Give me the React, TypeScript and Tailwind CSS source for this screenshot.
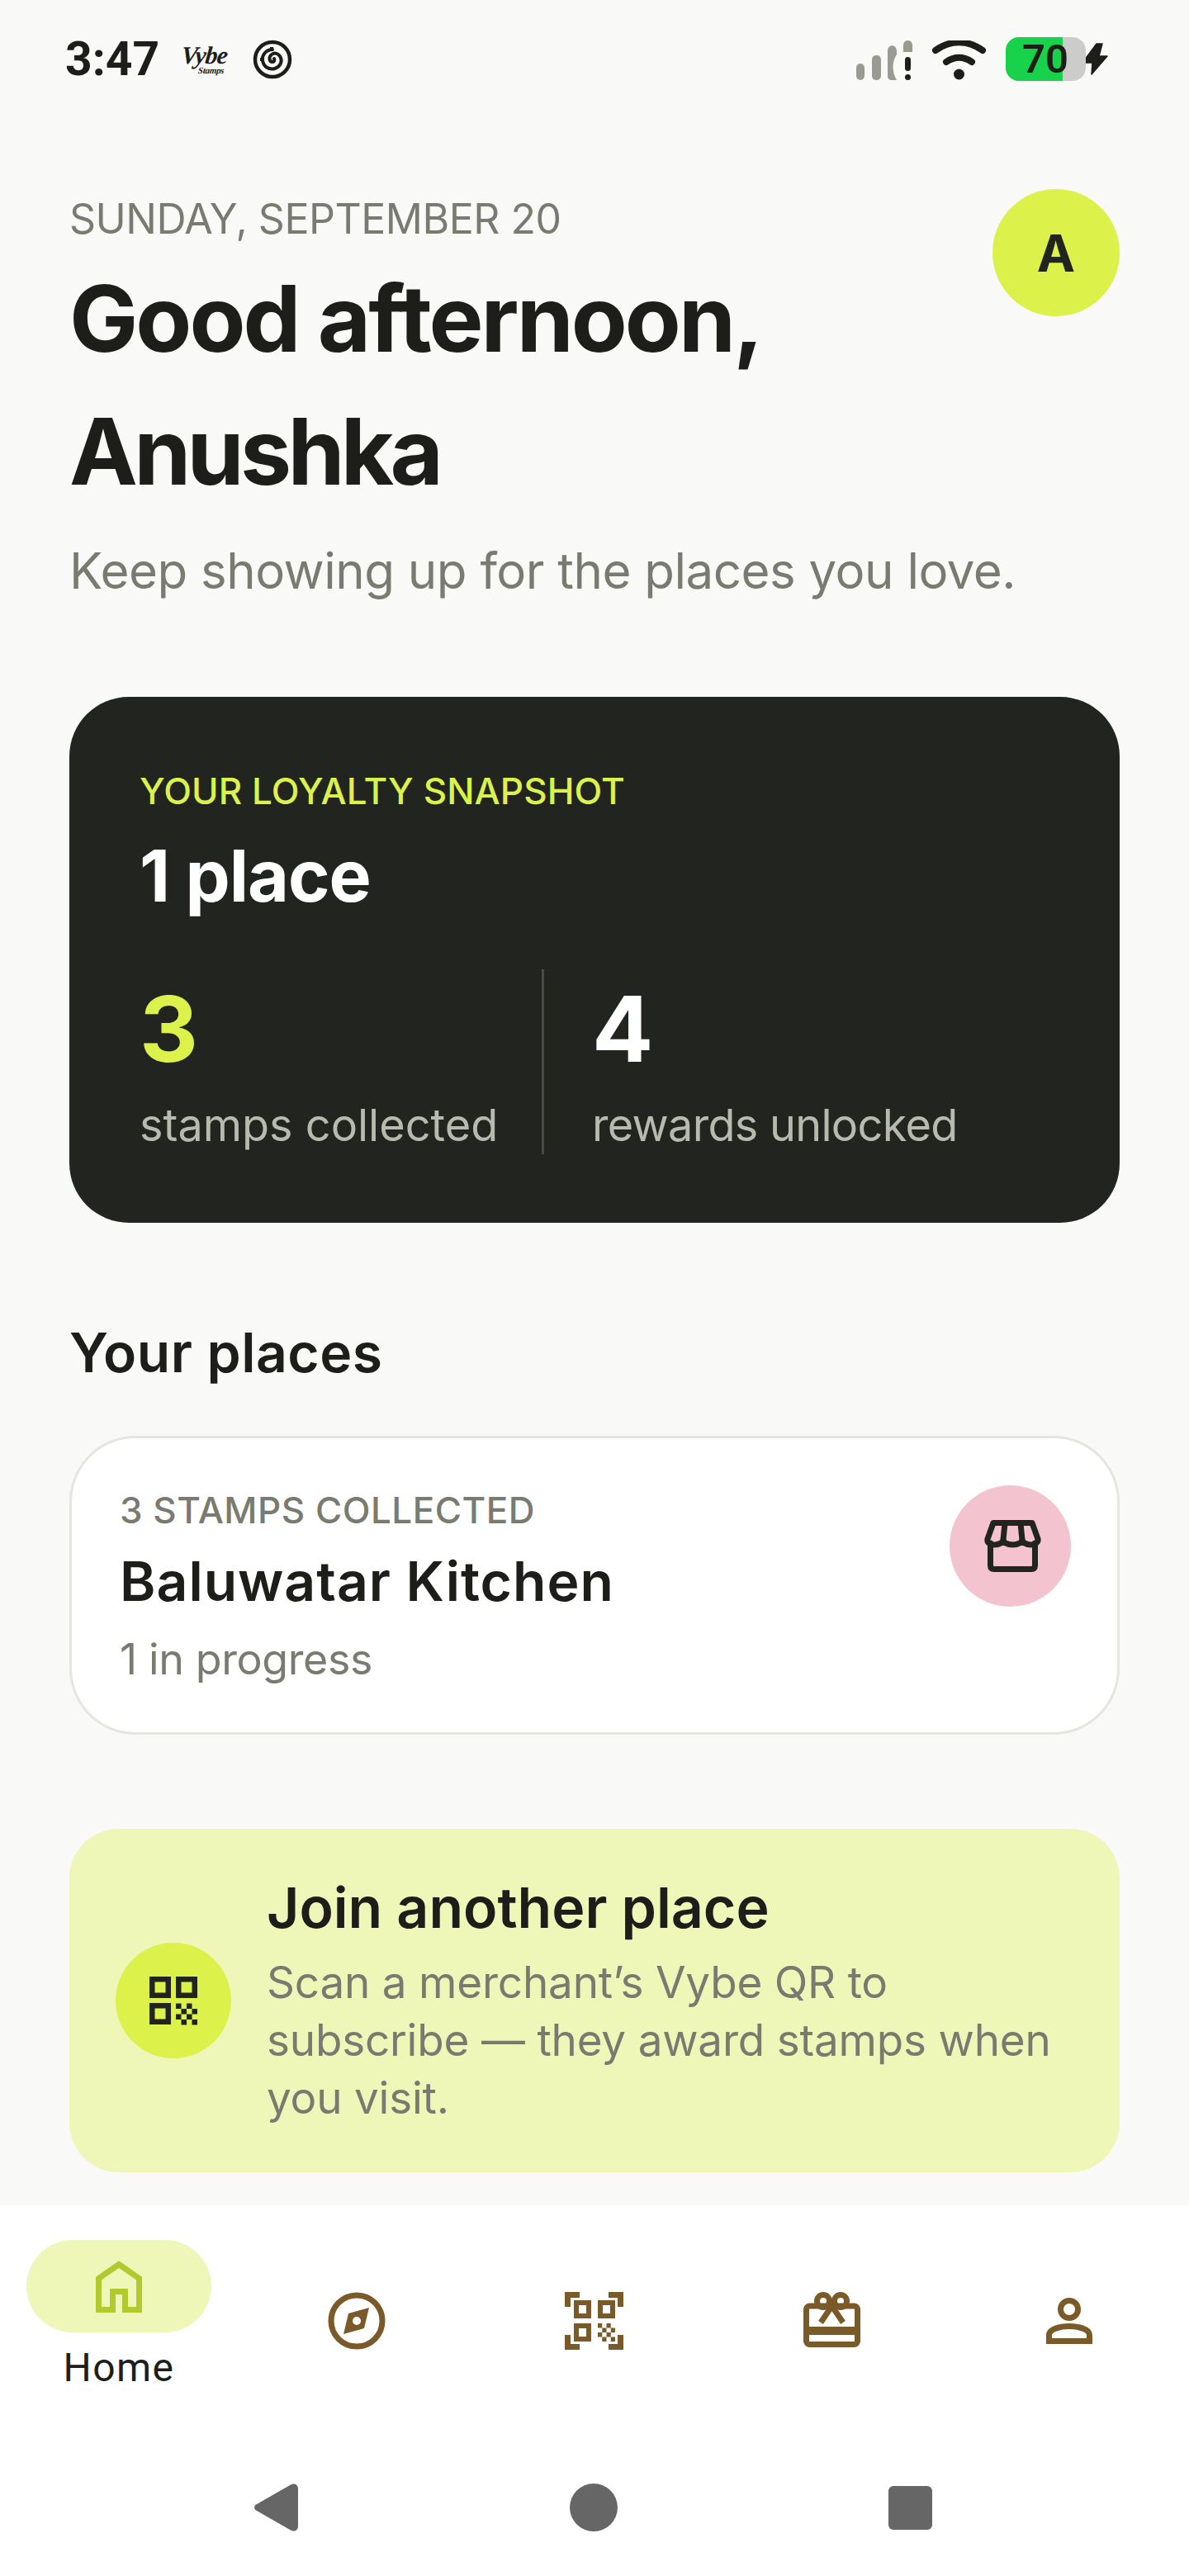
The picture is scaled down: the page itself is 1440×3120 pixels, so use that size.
import React from "react";

const F = "font-['Inter','Noto_Sans',sans-serif]";
const CHECKER = [[0,0],[0,2],[1,1],[1,3],[2,0],[2,2],[3,1],[3,3]];

function Store() {
  return (
    <svg width="69" height="63" viewBox="0 0 69 63" fill="none" stroke="#22241f" strokeWidth="7" strokeLinejoin="round" strokeLinecap="round">
      <path d="M11 3.5H58L65 23C66 28 60 30 56.5 30C51 30 46 27 46 24C46 27 41 30 34.5 30C28 30 23 27 23 24C23 27 18 30 12.5 30C8 30 3 28 4 23Z" />
      <path d="M23 24L25 4M46 24L44 4" />
      <path d="M7.5 28V55Q7.5 59.5 12 59.5H57Q61.5 59.5 61.5 55V28" />
    </svg>
  );
}

function QrSmall() {
  return (
    <svg width="59" height="59" viewBox="0 0 59 59" fill="none">
      <g stroke="#22241f" strokeWidth="6.5">
        <rect x="3.25" y="3.25" width="19.5" height="19.5" />
        <rect x="35.25" y="3.25" width="19.5" height="19.5" />
        <rect x="3.25" y="35.25" width="19.5" height="19.5" />
      </g>
      {CHECKER.map(([r, c]) => (
        <rect key={`${r}-${c}`} x={32 + c * 6.5} y={32.5 + r * 6.5} width="6.5" height="6.5" fill="#22241f" />
      ))}
    </svg>
  );
}

function NavHome() {
  return (
    <svg width="56" height="63" viewBox="0 0 56 63" fill="none" stroke="#b2c92f" strokeWidth="7">
      <path d="M20.5 59.5H3.5V21.5L28 4.5L52.5 21.5V59.5H35.5V37.5H20.5Z" />
    </svg>
  );
}

function NavCompass() {
  return (
    <svg width="70" height="70" viewBox="0 0 70 70" fill="none">
      <circle cx="35" cy="35" r="31" stroke="#7a5a28" strokeWidth="7" />
      <path fillRule="evenodd" clipRule="evenodd" d="M50 19L44 44L19 51L25 26ZM35 30A5 5 0 1 0 35 40A5 5 0 1 0 35 30Z" fill="#7a5a28" />
    </svg>
  );
}

function NavScan() {
  return (
    <svg width="71" height="70" viewBox="0 0 71 70" fill="none">
      <g stroke="#7a5a28" strokeWidth="7">
        <path d="M3.5 18V3.5H18M53 3.5H67.5V18M3.5 52V66.5H18M53 66.5H67.5V52" />
      </g>
      <g stroke="#7a5a28" strokeWidth="6">
        <rect x="14" y="13" width="15" height="16" />
        <rect x="43" y="13" width="15" height="16" />
        <rect x="14" y="41" width="15" height="16" />
      </g>
      {CHECKER.map(([r, c]) => (
        <rect key={`${r}-${c}`} x={40 + c * 5.25} y={38 + r * 5.5} width="5.25" height="5.5" fill="#7a5a28" />
      ))}
    </svg>
  );
}

function NavGift() {
  return (
    <svg width="69" height="67" viewBox="0 0 69 67" fill="none" stroke="#7a5a28" strokeWidth="7">
      <rect x="3.5" y="17" width="62" height="46.5" rx="4" />
      <circle cx="24" cy="11" r="7.5" />
      <circle cx="45" cy="11" r="7.5" />
      <path d="M34.5 17L21 37M34.5 17L48 37" />
      <path d="M3 47H66" strokeWidth="10" />
    </svg>
  );
}

function NavPerson() {
  return (
    <svg width="56" height="56" viewBox="0 0 56 56" fill="none" stroke="#7a5a28" strokeWidth="7">
      <circle cx="28" cy="14" r="10.5" />
      <path d="M3.5 52.5V45C3.5 38 17 34.5 28 34.5S52.5 38 52.5 45V52.5Z" />
    </svg>
  );
}

function Signal() {
  return (
    <svg width="70" height="50" viewBox="0 0 70 50" fill="none">
      <rect x="0" y="28" width="10" height="20" rx="5" fill="#9a9b90" />
      <rect x="19" y="18" width="11" height="30" rx="5" fill="#9a9b90" />
      <path d="M38 13C38 4 49 4 49 13V17C43 26 43 38 49 48H43C40 48 38 46 38 43Z" fill="#9a9b90" />
      <path d="M57 6C57 -2 68 -2 68 6V14H57Z" fill="#9a9b90" />
      <rect x="59" y="20" width="7" height="17" rx="3.5" fill="#1d1e19" />
      <circle cx="62.5" cy="44.5" r="3.5" fill="#1d1e19" />
    </svg>
  );
}

function Wifi() {
  return (
    <svg width="65" height="48" viewBox="0 0 65 48" fill="none">
      <path d="M4 12C22 -1 43 -1 61 12" stroke="#1d1e19" strokeWidth="8" strokeLinecap="round" />
      <path d="M17 26C27 19 38 19 48 26" stroke="#1d1e19" strokeWidth="8" strokeLinecap="round" />
      <circle cx="32.5" cy="41" r="6.5" fill="#1d1e19" />
    </svg>
  );
}

function Spiral() {
  return (
    <svg width="48" height="48" viewBox="0 0 48 48" fill="none" stroke="#1d1e19">
      <circle cx="24" cy="24" r="21" strokeWidth="4.5" />
      <path d="M24 12C16 12 11 19 12 25C13 33 20 37 27 35C33 33 36 27 34 22C32 17 27 15 23 18C19 21 20 27 24 27C26 27 27 25 26 23" strokeWidth="4" strokeLinecap="round" />
      <path d="M23 9V14M9 24H12" strokeWidth="4" />
    </svg>
  );
}

function Bolt() {
  const d = "M18 0L1 23H13L12 37L31 15H21L25 0Z";
  return (
    <svg className="overflow-visible" width="32" height="37" viewBox="0 0 32 37">
      <path d={d} fill="#f9f9f7" stroke="#f9f9f7" strokeWidth="7" strokeLinejoin="round" />
      <path d={d} fill="#1d1e19" stroke="#1d1e19" strokeWidth="1.5" strokeLinejoin="round" />
    </svg>
  );
}

export default function App() {
  return (
    <div className={`${F} flex h-[3120px] w-[1440px] flex-col overflow-hidden bg-[#f9f9f7] text-[#1d1e19]`}>
      {/* status bar */}
      <div className="flex h-[144px] shrink-0 items-start justify-between pl-[79px] pr-[98px] pt-[38px]">
        <div className="flex h-[68px] items-center">
          <span className="font-['Roboto',sans-serif] text-[57px] font-bold leading-[68px]">3:47</span>
          <div className="ml-[29px] flex w-[50px] -skew-x-6 flex-col items-center leading-none">
            <span className="font-['Liberation_Serif',serif] text-[30px] font-bold italic leading-[26px] tracking-[-1px]">Vybe</span>
            <span className="ml-[20px] font-['Liberation_Serif',serif] text-[11px] font-bold italic leading-[10px] tracking-[-0.3px]">Stamps</span>
          </div>
          <div className="ml-[34px]">
            <Spiral />
          </div>
        </div>
        <div className="flex items-start pt-[11px]">
          <Signal />
          <div className="ml-[22px]">
            <Wifi />
          </div>
          <div className="relative ml-[24px] mt-[-4px] h-[53px] w-[97px]">
            <div className="h-full w-full overflow-hidden rounded-[16px] bg-[#cccccb]">
              <div className="h-full w-[69px] bg-[#18d24c]" />
            </div>
            <span className="absolute left-[20px] top-0 font-['Roboto',sans-serif] text-[49px] font-semibold leading-[53px]">70</span>
          </div>
          <div className="ml-[-5px] mt-[4px]">
            <Bolt />
          </div>
        </div>
      </div>

      {/* scrolling content */}
      <div className="flex flex-1 flex-col px-[84px]">
        <div className="flex items-start justify-between">
          <div>
            <p className="mt-[89px] text-[50px] leading-[64px] tracking-[-0.5px] text-[#7a7b70]">SUNDAY, SEPTEMBER 20</p>
            <h1 className="mt-[8px] text-[111px] font-bold leading-[161px] tracking-[-3px]">
              Good afternoon,<br /><span className="tracking-[-4.7px]">Anushka</span>
            </h1>
          </div>
          <div className="mt-[85px] flex h-[154px] w-[154px] items-center justify-center rounded-full bg-[#dcf24b] text-[62px] font-bold text-[#22241f]">A</div>
        </div>
        <p className="mt-[24px] text-[60px] leading-[80px] tracking-[-0.5px] text-[#7a7b70]">Keep showing up for the places you love.</p>

        {/* dark card */}
        <div className="mt-[113px] h-[637px] rounded-[72px] bg-[#222420] pl-[85px] pt-[84px]">
          <p className="text-[44px] font-medium leading-[60px] tracking-[0.1px] text-[#dcf24b]">YOUR LOYALTY SNAPSHOT</p>
          <p className="mt-[23px] text-[86px] font-bold leading-[100px] tracking-[-1px] text-white">1 place</p>
          <div className="mt-[63px] flex h-[224px]">
            <div className="w-[490px] border-r-[3px] border-[#4a4b44] pt-[9px]">
              <p className="text-[110px] font-bold leading-[126px] text-[#dcf24b]">3</p>
              <p className="mt-[19px] text-[54px] leading-[70px] text-[#b8baae]">stamps collected</p>
            </div>
            <div className="pl-[58px] pt-[9px]">
              <p className="text-[110px] font-bold leading-[126px] text-white">4</p>
              <p className="mt-[19px] text-[54px] leading-[70px] tracking-[-0.7px] text-[#b8baae]">rewards unlocked</p>
            </div>
          </div>
        </div>

        <h2 className="mt-[122px] text-[66px] font-semibold leading-[70px] tracking-[0.5px]">Your places</h2>

        {/* place */}
        <div className="mt-[66px] flex h-[362px] items-start justify-between rounded-[80px] border-[3px] border-[#e5e6e0] bg-white pl-[58px] pr-[56px] pt-[57px]">
          <div>
            <p className="text-[44px] font-medium leading-[60px] tracking-[0.5px] text-[#7a7b70]">3 STAMPS COLLECTED</p>
            <p className="mt-[14px] text-[66px] font-semibold leading-[84px] tracking-[1px]">Baluwatar Kitchen</p>
            <p className="mt-[18px] text-[52px] leading-[70px] tracking-[-0.4px] text-[#7a7b70]">1 in progress</p>
          </div>
          <div className="flex h-[147px] w-[147px] items-center justify-center rounded-full bg-[#f3c4cf] pl-[5px]">
            <Store />
          </div>
        </div>

        {/* join */}
        <div className="mt-[114px] flex h-[416px] items-center gap-[43px] rounded-[60px] bg-[#eef7b8] pl-[56px] pr-[60px]">
          <div className="flex h-[140px] w-[140px] shrink-0 items-center justify-center rounded-full bg-[#dcf24b]">
            <QrSmall />
          </div>
          <div>
            <p className="text-[68px] font-semibold leading-[80px]">Join another place</p>
            <p className="mt-[16px] text-[53px] leading-[70px] tracking-[-0.2px] text-[#7a7b70]">Scan a merchant’s Vybe QR to subscribe — they award stamps when you visit.</p>
          </div>
        </div>
      </div>

      {/* tab bar */}
      <div className="h-[449px] shrink-0 bg-white">
        <div className="flex h-[337px] items-start pl-[32px] pt-[42px]">
          <div className="flex w-[224px] flex-col items-center">
            <div className="flex h-[112px] w-[224px] items-center justify-center rounded-full bg-[#eef7b8]">
              <NavHome />
            </div>
            <span className="mt-[13px] font-['Roboto',sans-serif] text-[48px] leading-[60px] tracking-[1.5px]">Home</span>
          </div>
          <div className="ml-[141px] mt-[63px]"><NavCompass /></div>
          <div className="ml-[217px] mt-[63px]"><NavScan /></div>
          <div className="ml-[218px] mt-[63px]"><NavGift /></div>
          <div className="ml-[225px] mt-[70px]"><NavPerson /></div>
        </div>
        <div className="flex items-center pl-[308px]">
          <svg width="53" height="58" viewBox="0 0 53 58">
            <path d="M44 1.5C48 -1 53 1 53 6V52C53 57 48 59 44 56.5L3 33C-1 31 -1 27 3 25Z" fill="#666" />
          </svg>
          <div className="ml-[329px] h-[58px] w-[58px] rounded-full bg-[#666]" />
          <div className="ml-[328px] h-[53px] w-[53px] rounded-[6px] bg-[#666]" />
        </div>
      </div>
    </div>
  );
}
